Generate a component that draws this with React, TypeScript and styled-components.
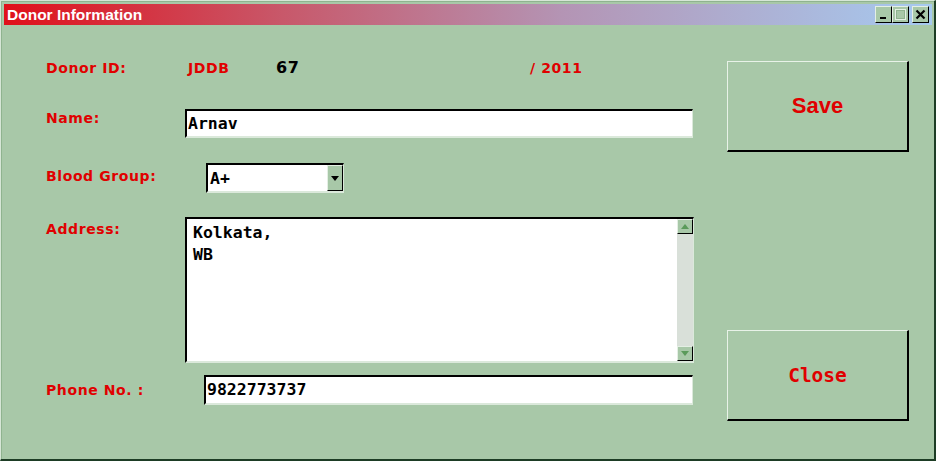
import styled, { createGlobalStyle } from 'styled-components';

const GlobalStyle = createGlobalStyle`
  html, body {
    margin: 0;
    padding: 0;
    background: #a8c8a8;
  }
  * {
    box-sizing: border-box;
  }
`;

const Window = styled.div`
  width: 936px;
  height: 461px;
  display: flex;
  flex-direction: column;
  padding: 3px 2px 3px 3px;
  background-color: #a8c8a8;
  border-top: 1px solid #d6e6d6;
  border-left: 1px solid #d6e6d6;
  border-right: 2px solid #1d3d25;
  border-bottom: 2px solid #1d3d25;
  box-shadow: inset 1px 1px 0 #8fb38f;
`;

const TitleBar = styled.div`
  height: 21px;
  display: flex;
  align-items: center;
  justify-content: space-between;
  padding: 0 3px 0 3px;
  background: linear-gradient(to right, #e0101a 0%, #c8586a 30%, #b494b4 60%, #a6caf0 100%);
  .title-text {
    color: #ffffff;
    font-family: 'Liberation Sans', Arial, sans-serif;
    font-weight: bold;
    font-size: 15.5px;
  }
  .title-buttons {
    display: flex;
    align-items: center;
  }
`;

const CaptionButton = styled.div<{ $gap?: number }>`
  width: 17px;
  height: 17px;
  margin-left: ${(p) => p.$gap ?? 0}px;
  display: flex;
  align-items: center;
  justify-content: center;
  background-color: #a8c8a8;
  border-top: 1px solid #e4efe4;
  border-left: 1px solid #e4efe4;
  border-right: 1px solid #000;
  border-bottom: 1px solid #000;
`;

const Body = styled.div`
  flex: 1;
  display: flex;
  padding: 34px 0 0 42px;
`;

const Form = styled.div`
  width: 648px;
  display: flex;
  flex-direction: column;
`;

const Row = styled.div<{ $top: number }>`
  display: flex;
  align-items: flex-start;
  margin-top: ${(p) => p.$top}px;
`;

const Label = styled.div<{ $width?: number; $pad?: number; $color?: string; $size?: number }>`
  width: ${(p) => (p.$width ? `${p.$width}px` : 'auto')};
  padding-top: ${(p) => p.$pad ?? 0}px;
  color: ${(p) => p.$color ?? '#e00000'};
  font-family: 'DejaVu Sans', 'Comic Sans MS', sans-serif;
  font-weight: bold;
  font-size: ${(p) => p.$size ?? 14}px;
  letter-spacing: 0.6px;
  line-height: 18px;
  white-space: pre;
  flex-shrink: 0;
`;

const Sunken = styled.div<{ $width: number; $height: number; $indent?: number }>`
  width: ${(p) => p.$width}px;
  height: ${(p) => p.$height}px;
  margin-left: ${(p) => p.$indent ?? 0}px;
  background-color: #ffffff;
  border-top: 2px solid #000;
  border-left: 2px solid #000;
  border-right: 1px solid #dbe9db;
  border-bottom: 2px solid #dbe9db;
  font-family: 'DejaVu Sans Mono', 'Liberation Mono', monospace;
  font-weight: bold;
  font-size: 16.5px;
  color: #000;
  display: flex;
`;

const FieldText = styled.div`
  padding: 2px 0 0 1px;
  line-height: 22px;
`;

const SelectBox = styled(Sunken)`
  justify-content: space-between;
  align-items: stretch;
  .select-value {
    padding: 3px 0 0 2px;
    line-height: 22px;
  }
`;

const DropButton = styled.div`
  width: 16px;
  display: flex;
  align-items: center;
  justify-content: center;
  background-color: #a8c8a8;
  border-top: 1px solid #e4efe4;
  border-left: 1px solid #e4efe4;
  border-right: 1px solid #000;
  border-bottom: 1px solid #000;
`;

const AreaText = styled.div`
  flex: 1;
  padding: 3px 0 0 6px;
  line-height: 22px;
  white-space: pre;
`;

const ScrollBar = styled.div`
  width: 16px;
  display: flex;
  flex-direction: column;
  justify-content: space-between;
  background-color: #d9e0d9;
`;

const ScrollArrow = styled.div`
  height: 15px;
  display: flex;
  align-items: center;
  justify-content: center;
  background-color: #a8c8a8;
  border-top: 1px solid #e4efe4;
  border-left: 1px solid #e4efe4;
  border-right: 1px solid #000;
  border-bottom: 1px solid #000;
`;

const Actions = styled.div`
  margin-left: 33px;
  padding-top: 2px;
  height: 362px;
  display: flex;
  flex-direction: column;
  justify-content: space-between;
`;

const ActionButton = styled.button<{ $mono?: boolean }>`
  width: 182px;
  height: 91px;
  padding: 0;
  background-color: #a8c8a8;
  border-top: 1px solid #e8f2e8;
  border-left: 1px solid #e8f2e8;
  border-right: 2px solid #000;
  border-bottom: 2px solid #000;
  color: #e00000;
  font-family: ${(p) =>
    p.$mono ? "'DejaVu Sans Mono', 'Liberation Mono', monospace" : "'Liberation Sans', Arial, sans-serif"};
  font-weight: bold;
  font-size: ${(p) => (p.$mono ? '19.5px' : '22px')};
  cursor: pointer;
  outline: none;
`;

const Triangle = ({ up, color }: { up?: boolean; color: string }) => (
  <svg width='8' height='5' viewBox='0 0 8 5'>
    <path d={up ? 'M0 5 L4 0 L8 5 Z' : 'M0 0 L8 0 L4 5 Z'} fill={color} />
  </svg>
);

const App = () => {
  return (
    <>
      <GlobalStyle />
      <Window>
        <TitleBar>
          <span className='title-text'>Donor Information</span>
          <div className='title-buttons'>
            <CaptionButton>
              <svg width='11' height='11' viewBox='0 0 11 11'>
                <rect x='2' y='8' width='6' height='2' fill='#000' />
              </svg>
            </CaptionButton>
            <CaptionButton>
              <svg width='11' height='11' viewBox='0 0 11 11'>
                <rect x='0.5' y='0.5' width='10' height='10' fill='none' stroke='#e4efe4' />
                <rect x='1.5' y='1.5' width='8' height='8' fill='none' stroke='#8fb38f' />
              </svg>
            </CaptionButton>
            <CaptionButton $gap={3}>
              <svg width='11' height='11' viewBox='0 0 11 11'>
                <path d='M1.5 1.5 L9.5 9.5 M9.5 1.5 L1.5 9.5' stroke='#000' strokeWidth='2.2' />
              </svg>
            </CaptionButton>
          </div>
        </TitleBar>
        <Body>
          <Form>
            <Row $top={0}>
              <Label $width={142}>Donor ID:</Label>
              <Label $width={88}>JDDB</Label>
              <Label $width={254} $color='#000' $size={16}>67</Label>
              <Label>/ 2011</Label>
            </Row>
            <Row $top={32}>
              <Label $width={139} $pad={0}>Name:</Label>
              <Sunken $width={508} $height={29}>
                <FieldText>Arnav</FieldText>
              </Sunken>
            </Row>
            <Row $top={25}>
              <Label $width={139} $pad={4}>Blood Group:</Label>
              <SelectBox $width={138} $height={30} $indent={21}>
                <span className='select-value'>A+</span>
                <DropButton>
                  <Triangle color='#000' />
                </DropButton>
              </SelectBox>
            </Row>
            <Row $top={24}>
              <Label $width={139} $pad={3}>Address:</Label>
              <Sunken $width={509} $height={146}>
                <AreaText>{'Kolkata,\nWB'}</AreaText>
                <ScrollBar>
                  <ScrollArrow>
                    <Triangle up color='#5a9a5a' />
                  </ScrollArrow>
                  <ScrollArrow>
                    <Triangle color='#5a9a5a' />
                  </ScrollArrow>
                </ScrollBar>
              </Sunken>
            </Row>
            <Row $top={12}>
              <Label $width={139} $pad={6}>Phone No. :</Label>
              <Sunken $width={489} $height={30} $indent={19}>
                <FieldText>9822773737</FieldText>
              </Sunken>
            </Row>
          </Form>
          <Actions>
            <ActionButton type='button'>Save</ActionButton>
            <ActionButton type='button' $mono>
              Close
            </ActionButton>
          </Actions>
        </Body>
      </Window>
    </>
  );
};

export default App;
